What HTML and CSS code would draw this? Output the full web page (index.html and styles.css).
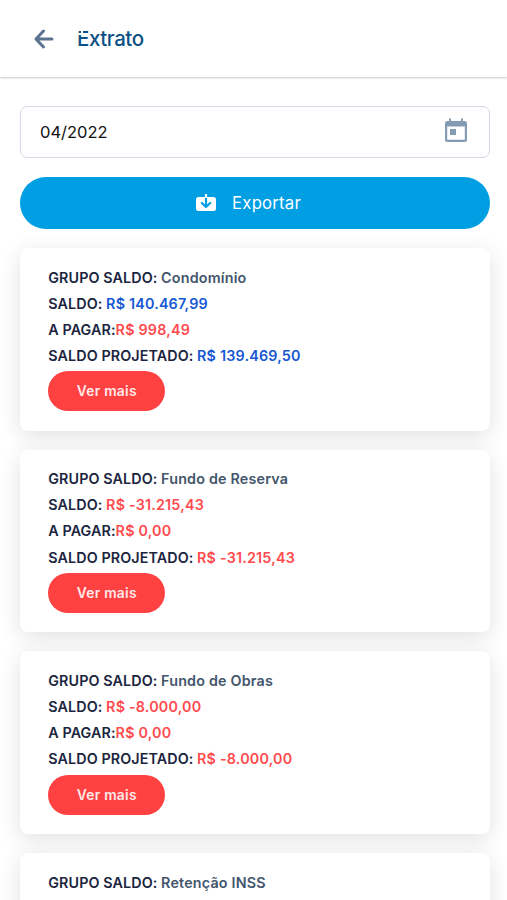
FILE: index.html
```html
<!DOCTYPE html>
<html lang="pt-BR">
<head>
<meta charset="utf-8">
<meta name="viewport" content="width=device-width">
<title>Extrato</title>
<link rel="stylesheet" href="styles.css">
</head>
<body>
<header class="topbar">
  <svg class="back" viewBox="0 0 20 20"><path d="M18 10H3M9.5 2L2 10l7.500 8"/></svg>
  <h1>Extrato</h1>
</header>
<main>
  <div class="month"><span>04/2022</span>
    <svg class="calendar" viewBox="0 0 22 25"><path fill-rule="evenodd" d="M4 1.200a1 1 0 0 1 2 0V3h10V1.200a1 1 0 0 1 2 0V3h1.500A2.500 2.500 0 0 1 22 5.500v16a2.500 2.500 0 0 1-2.500 2.500h-17A2.500 2.500 0 0 1 0 21.500v-16A2.500 2.500 0 0 1 2.500 3H4zM2.200 8.500v13.300h17.600V8.500zM5 11h6v6H5z"/></svg>
  </div>
  <button class="export">
    <svg viewBox="0 0 20 18"><path fill="#fff" d="M2.500 3h15A2.500 2.500 0 0 1 20 5.500v9a2.500 2.500 0 0 1-2.500 2.500h-15A2.500 2.500 0 0 1 0 14.500v-9A2.500 2.500 0 0 1 2.500 3z"/><path class="arrow" d="M10 4v8.500M5.800 9L10 13l4.200-4"/><path class="stem" d="M10 .8V3"/></svg>
    <span>Exportar</span>
  </button>
  <section class="card">
    <p>GRUPO SALDO: <span class="name">Condomínio</span></p>
    <p>SALDO: <span class="pos">R$ 140.467,99</span></p>
    <p>A PAGAR:<span class="neg">R$ 998,49</span></p>
    <p>SALDO PROJETADO: <span class="pos">R$ 139.469,50</span></p>
    <button class="more">Ver mais</button>
  </section>
  <section class="card">
    <p>GRUPO SALDO: <span class="name">Fundo de Reserva</span></p>
    <p>SALDO: <span class="neg">R$ -31.215,43</span></p>
    <p>A PAGAR:<span class="neg">R$ 0,00</span></p>
    <p>SALDO PROJETADO: <span class="neg">R$ -31.215,43</span></p>
    <button class="more">Ver mais</button>
  </section>
  <section class="card">
    <p>GRUPO SALDO: <span class="name">Fundo de Obras</span></p>
    <p>SALDO: <span class="neg">R$ -8.000,00</span></p>
    <p>A PAGAR:<span class="neg">R$ 0,00</span></p>
    <p>SALDO PROJETADO: <span class="neg">R$ -8.000,00</span></p>
    <button class="more">Ver mais</button>
  </section>
  <section class="card">
    <p>GRUPO SALDO: <span class="name">Retenção INSS</span></p>
  </section>
</main>
</body>
</html>
```
FILE: styles.css
```css
* { box-sizing: border-box; }
html { overflow: hidden; }
body { margin: 0; height: 900px; overflow: hidden; background: #fff; font-family: Inter, sans-serif; color: #1b2540; }
.topbar { height: 77px; display: flex; align-items: center; padding-left: 34px; box-shadow: 0 1px 2px rgba(0,0,0,.22); }
.back { width: 20px; height: 20px; fill: none; stroke: #5b7390; stroke-width: 3; stroke-linecap: round; stroke-linejoin: round; }
h1 { position: relative; margin: 0 0 0 23px; font-size: 20.5px; line-height: 24px; font-weight: 500; letter-spacing: -.45px; color: #0c5085; }
h1::before { content: ""; position: absolute; left: 0; top: 6.500px; width: 12px; height: 2px; background: #fff; }
h1::after { content: ""; position: absolute; left: 4px; top: 3px; width: 2px; height: 4px; background: #fff; }
main { display: flex; flex-direction: column; gap: 19.2px; padding: 28.700px 17px 0 20px; height: 823px; overflow: hidden; }
.month { flex: none; height: 52px; display: flex; align-items: center; justify-content: space-between; padding: 0 22.500px 0 19px; border: 1.500px solid #d3dae5; border-radius: 7px; font-size: 16.5px; color: #111; }
.calendar { width: 22px; height: 25px; margin-top: -2px; fill: #849bb2; }
.export { flex: none; height: 52px; padding: 0 13px 0 0; border: 0; border-radius: 26px; background: #009ee3; color: #fff; font: 400 16.700px Inter, sans-serif; letter-spacing: .22px; display: flex; align-items: center; justify-content: center; gap: 16px; }
.export svg { width: 20px; height: 18px; fill: none; stroke-width: 2.200; stroke-linecap: round; stroke-linejoin: round; }
.arrow { stroke: #009ee3; }
.stem { stroke: #fff; }
.card { height: 182.500px; flex: none; padding: 16.500px 28.300px; border-radius: 8px; background: #fff; box-shadow: 0 5px 22px rgba(0,0,0,.12); }
p { margin: 0; font-size: 14.3px; line-height: 26.1px; font-weight: 600; letter-spacing: .1px; white-space: pre; }
p span { letter-spacing: .2px; }
.name { color: #43566c; }
.pos { color: #1658d3; }
.neg { color: #ff4b4e; }
.more { display: block; margin-top: 2.200px; width: 117px; height: 40px; padding: 0; border: 0; border-radius: 20px; background: #ff4141; color: #ffe9e9; font: 600 13.800px Inter, sans-serif; letter-spacing: .25px; }
```
